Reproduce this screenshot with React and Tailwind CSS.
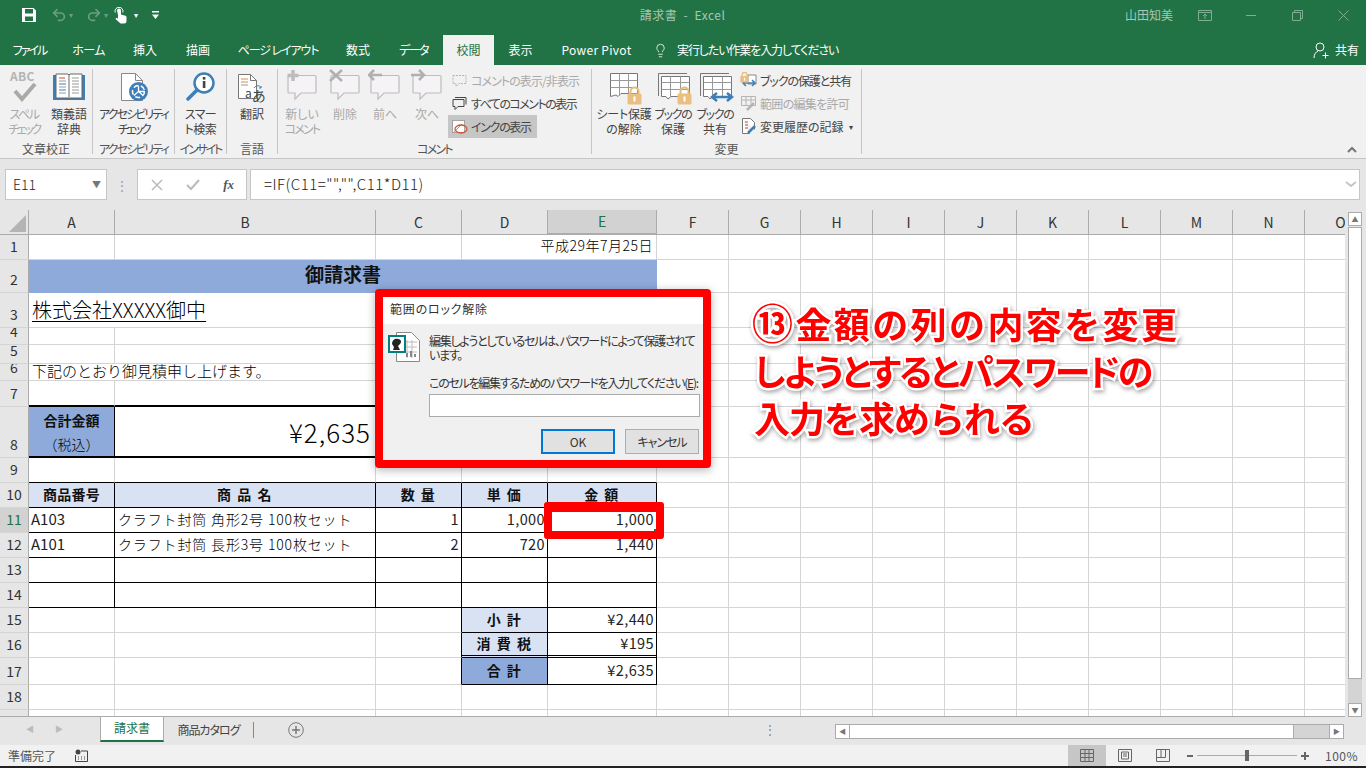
import { Lightbulb, Redo2, Undo2 } from "lucide-react"

const RIGHT = { g: "border-r border-r-[#d4d4d4]", k: "border-r border-r-black", n: "border-r-0" }
const BOTTOM = {
    g: "border-b border-b-[#d4d4d4]",
    k: "border-b border-b-black",
    K: "border-b-2 border-b-black",
    d: "border-b-[3px] border-b-black border-double",
    n: "border-b-0",
}
const SPAN = { 1: "col-span-1", 2: "col-span-2", 5: "col-span-5" }

// katakana runs much narrower in the original UI font
const KANA = {
    "スペル": "tracking-[-1.5px]",
    "チェック": "tracking-[-2.5px]",
    "アクセシビリティ": "tracking-[-1.9px]",
    "インサイト": "tracking-[-2.2px]",
    "スマー": "tracking-[-0.5px]",
    "ト検索": "tracking-[-0.5px]",
    "コメント": "tracking-[-1.8px]",
    "ブックの": "tracking-[-1.3px]",
    "シート保護": "tracking-[-0.2px]",
}

const Cell = ({ r = "g", b = "g", span = 1, className = "", children }) => (
    <div className={`${RIGHT[r]} ${BOTTOM[b]} ${SPAN[span]} flex items-center overflow-hidden whitespace-nowrap ${className}`}>{children}</div>
)

const Head = ({ children, active }) => (
    <div className={`flex items-center justify-center border-r border-b border-r-[#ababab] border-b-[#ababab] text-[14px] ${active ? "bg-[#d2d2d2] text-[#217346] border-b-2 border-b-[#217346]" : "bg-[#e6e6e6] text-[#333]"}`}>{children}</div>
)

const Row = ({ n, active, children }) => (
    <>
        <div className={`flex items-end justify-center overflow-hidden border-r border-b border-r-[#ababab] border-b-[#d4d4d4] text-[14px] ${active ? "bg-[#d2d2d2] text-[#217346]" : "bg-[#e6e6e6] text-[#333]"}`}>
            <span className="h-[25px] shrink-0 leading-[25px]">{n}</span>
        </div>
        {children}
        {Array.from({ length: 10 }).map((_, i) => <Cell key={i} />)}
    </>
)

const TH = ({ children, b = "k", fill = "bg-[#d9e2f3]", track = "tracking-[1.500px]" }) => (
    <Cell r="k" b={b} className={`${fill} ${track} justify-center pb-[1px] font-bold text-[14px] text-[#111]`}>{children}</Cell>
)
const Num = ({ children, b = "k" }) => (
    <Cell r="k" b={b} className="justify-end pb-[2px] pr-[2px] text-[14.500px] tracking-[0.4px] text-[#222]">{children}</Cell>
)

// ribbon bits
const Group = ({ w, label, children }) => (
    <div className={`${w} mt-[4px] flex h-[85px] shrink-0 flex-col border-r border-[#c6c6c6]`}>
        <div className="flex h-[75px] overflow-visible">{children}</div>
        <div className={`h-[10px] whitespace-nowrap text-center text-[12px] leading-[10px] text-[#555] ${KANA[label] ?? ""}`}>{label}</div>
    </div>
)

const Big = ({ w, icon, lines, off }) => (
    <div className={`${w} flex shrink-0 flex-col items-center text-[12px] leading-[15px] ${off ? "text-[#a9a9a9]" : "text-[#444]"}`}>
        <div className="flex h-[37px] items-start justify-center">{icon}</div>
        {lines.map(l => <div key={l} className={`whitespace-nowrap ${KANA[l] ?? ""}`}>{l}</div>)}
    </div>
)

const Small = ({ icon, children, off, on, className = "" }) => (
    <div className={`flex h-[23px] items-center gap-[3px] whitespace-nowrap text-[12px] ${off ? "text-[#a9a9a9]" : "text-[#444]"} ${on ? "bg-[#c6c6c6]" : ""} ${className}`}>
        <span className="flex w-[17px] justify-center">{icon}</span>
        {children}
    </div>
)

const Bubble = ({ children }) => (
    <svg width="34" height="34" viewBox="0 0 34 34" fill="none">
        <path d="M4 6.500h26a1 1 0 0 1 1 1V23a1 1 0 0 1-1 1H16l-6 6v-6H4a1 1 0 0 1-1-1V7.500a1 1 0 0 1 1-1z" fill="#f5f3f5" stroke="#bdbdbd" strokeWidth="1.2" />
        {children}
    </svg>
)

const Lock = ({ x, y }) => (
    <g transform={`translate(${x} ${y})`}>
        <path d="M3.500 7V4.500a4 4 0 0 1 8 0V7" stroke="#e6bc78" strokeWidth="2" fill="none" />
        <rect x="0.500" y="6.500" width="14" height="11" rx="1.500" fill="#e9c07f" />
        <rect x="6.500" y="9.500" width="2" height="5" fill="#fff" />
    </g>
)

const SheetGrid = ({ book, box, children }) => (
    <svg className="mt-[3px]" width="40" height="36" viewBox={box} fill="none">
        {book && <path d="M1.500 24V1.500H30" stroke="#777" />}
        <path d={book ? "M4.500 24.500V4.500h28v20H14l-3 2.500-2-2.500z" : "M1.500 24.500V1.500h27v20H12l-3 3-2-1.500z"} fill="#fff" stroke="#777" />
        <path d={book ? "M4.500 10.500h28M4.500 17.500h28M13.500 4.500v20M23.500 4.500v20" : "M1.500 8.500h27M1.500 15.500h27M10.500 1.500v22M19.500 1.500v20"} stroke="#999" />
        {children}
    </svg>
)

const TOP_TABS = [
    ["ファイル", "w-[59px] tracking-[-2px]"], ["ホーム", "w-[59px] tracking-[-0.6px]"], ["挿入", "w-[54px]"], ["描画", "w-[52px]"],
    ["ページ レイアウト", "w-[108px] tracking-[-1.100px]"], ["数式", "w-[52px]"], ["データ", "w-[59px] tracking-[-1.600px]"],
]

const App = () => (
    <div className="relative flex h-[768px] w-[1366px] flex-col overflow-hidden bg-[#e6e6e6] font-['Noto_Sans_CJK_JP','Noto_Sans',sans-serif] [font-feature-settings:'palt']">
        {/* title bar */}
        <div className="flex h-[35px] shrink-0 items-center bg-[#217346] pb-[5px] text-[12px] text-[#a6c7b5]">
            <div className="flex flex-1 items-center pl-[21px]">
                <svg width="16" height="16" viewBox="0 0 16 16"><path fillRule="evenodd" d="M1 1h11.500L15 3.500V15H1zM4 2v4.500h8V2zM4 9.500V14h8V9.500z" fill="#fff" /></svg>
                <Undo2 size={16} strokeWidth={2.5} className="ml-[14px] text-[#6a9f82]" />
                <span className="ml-[2px] text-[8px] text-[#6a9f82]">▾</span>
                <Redo2 size={16} strokeWidth={2.5} className="ml-[13px] text-[#6a9f82]" />
                <span className="ml-[2px] text-[8px] text-[#6a9f82]">▾</span>
                <svg className="ml-[6px]" width="13" height="17" viewBox="0 0 13 17" fill="#fff">
                    <path d="M3 3.500a2 2 0 0 1 4 0v4l4.500 1.200a1.500 1.500 0 0 1 1 1.500V14a2.500 2.500 0 0 1-2.500 2.500H6.500L1.500 12l.8-1.200L4 11.500V8z" />
                    <path d="M1.200 5.500a4 4 0 1 1 7.600 0" fill="none" stroke="#fff" />
                </svg>
                <span className="ml-[7px] text-[8px] text-white">▾</span>
                <svg className="ml-[14px]" width="7" height="8" viewBox="0 0 7 8" fill="#fff"><path d="M0 0h7v1.500H0zM0 3.500h7L3.500 8z" /></svg>
            </div>
            <div className="mr-[22px] tracking-[0.5px]">請求書 &nbsp;-&nbsp; Excel</div>
            <div className="flex flex-1 items-center justify-end">
                <span className="mr-[9px] text-[12px]">山田知美</span>
                <div className="flex w-[46px] justify-center">
                    <svg width="14" height="11" viewBox="0 0 14 11" fill="none" stroke="#7fae94"><path d="M.5.500h13v10H.5zM.5 2.500h13M7 9V4.500M5 6l2-2 2 2" /></svg>
                </div>
                <div className="flex w-[46px] justify-center"><div className="h-px w-[10px] bg-[#7fae94]" /></div>
                <div className="flex w-[46px] justify-center">
                    <svg width="11" height="11" viewBox="0 0 11 11" fill="none" stroke="#7fae94"><path d="M.5 2.500h8v8h-8zM2.500 2.500v-2h8v8h-2" /></svg>
                </div>
                <div className="flex w-[46px] justify-center">
                    <svg width="11" height="11" viewBox="0 0 11 11" stroke="#7fae94"><path d="M.5.500l10 10M10.500.500l-10 10" /></svg>
                </div>
            </div>
        </div>

        {/* tabs */}
        <div className="flex h-[30px] shrink-0 items-center bg-[#217346] text-[12px] text-white">
            {TOP_TABS.map(([t, w]) => <div key={t} className={`${w} text-center`}>{t}</div>)}
            <div className="flex h-full w-[51px] items-center justify-center bg-[#f1f1f1] text-[#217346]">校閲</div>
            <div className="w-[53px] text-center">表示</div>
            <div className="w-[99px] text-center tracking-[0.3px]">Power Pivot</div>
            <Lightbulb size={15} strokeWidth={1.25} className="ml-[7px]" />
            <span className="ml-[9px] tracking-[-1.100px]">実行したい作業を入力してください</span>
            <div className="ml-auto flex items-center gap-[6px] pr-[7px]">
                <svg width="16" height="17" viewBox="0 0 16 17" fill="none" stroke="#fff"><circle cx="7" cy="5" r="4" /><path d="M1 16c0-4 2-6 4-7M9.500 13.500h6M12.500 10.500v6" /></svg>
                <span>共有</span>
            </div>
        </div>

        {/* ribbon */}
        <div className="relative flex h-[94px] shrink-0 border-b border-[#c6c6c6] bg-[#f1f1f1]">
            <Group w="w-[93px]" label="文章校正">
                <Big w="w-[48px]" off lines={["スペル", "チェック"]} icon={
                    <div className="relative h-[36px] w-[28px]">
                        <span className="absolute left-0 top-0 text-[12px] font-bold leading-[13px] tracking-[0.3px] text-[#b4b4b4]">ABC</span>
                        <svg className="absolute left-[3px] top-[12px]" width="24" height="22" viewBox="0 0 24 22" fill="none"><path d="M2 10l7 8L22 3" stroke="#a9a9a9" strokeWidth="4" /></svg>
                    </div>
                } />
                <Big w="w-[42px]" lines={["類義語", "辞典"]} icon={
                    <svg className="mt-[4px]" width="32" height="28" viewBox="0 0 32 28" fill="none">
                        <path d="M0 2h3v23h26V2h3v25H0z" fill="#3f7fb8" />
                        <path d="M3 1h12l1 1 1-1h12v24H17l-1 1-1-1H3z" fill="#fff" stroke="#666" />
                        <path d="M16 2v23" stroke="#666" />
                        <path d="M6 5h6" stroke="#d2452f" />
                        <path d="M6 8h7M6 14h7M19 5h7M19 8h7M19 11h7M19 14h7M19 17h7M19 20h7M6 20h7" stroke="#999" />
                        <path d="M6 11h7M6 17h7" stroke="#3f7fb8" />
                    </svg>
                } />
            </Group>
            <Group w="w-[82px]" label="アクセシビリティ">
                <Big w="w-[81px]" lines={["アクセシビリティ", "チェック"]} icon={
                    <svg className="mt-[3px]" width="30" height="30" viewBox="0 0 30 30" fill="none">
                        <path d="M2.500 1.500h14l7 7v20h-21z" fill="#fff" stroke="#888" />
                        <path d="M16.500 1.500v7h7" stroke="#888" />
                        <circle cx="19.500" cy="19.500" r="9.500" fill="#3f7fb8" />
                        <circle cx="19.500" cy="19.500" r="6" fill="none" stroke="#fff" strokeWidth="1.500" strokeDasharray="5 2.500" />
                        <path d="M19.500 14v5.500l-4.500 4M19.500 19.500l4.500 4M19.500 19.500H26" stroke="#fff" strokeWidth="1.300" />
                    </svg>
                } />
            </Group>
            <Group w="w-[52px]" label="インサイト">
                <Big w="w-[51px]" lines={["スマー", "ト検索"]} icon={
                    <svg className="mt-[3px]" width="30" height="30" viewBox="0 0 30 30" fill="none">
                        <circle cx="18" cy="11" r="9.500" fill="#fff" stroke="#3f7fb8" strokeWidth="2.500" />
                        <path d="M11 18l-9 9" stroke="#3f7fb8" strokeWidth="3.500" strokeLinecap="round" />
                        <rect x="16.800" y="9" width="2.600" height="7" fill="#444" />
                        <rect x="16.800" y="5" width="2.600" height="2.600" fill="#444" />
                    </svg>
                } />
            </Group>
            <Group w="w-[51px]" label="言語">
                <Big w="w-[50px]" lines={["翻訳"]} icon={
                    <div className="relative mt-[4px] h-[32px] w-[30px]">
                        <svg width="30" height="30" viewBox="0 0 30 30" fill="none">
                            <path d="M1.500 1.500h12l6 6v18h-18z" fill="#fff" stroke="#777" />
                            <path d="M13.500 1.500v6h6" stroke="#777" />
                            <path d="M4 6h7M4 9h7" stroke="#e08a3e" />
                            <path d="M4 12h7" stroke="#999" />
                            <path d="M17 15c2-3 6-3 7 0M24 15l-2 0M24 15v-2" stroke="#3f7fb8" />
                        </svg>
                        <span className="absolute left-[8px] top-[13px] text-[12px] leading-[14px] text-[#444]">a</span>
                        <span className="absolute left-[15px] top-[14px] text-[14px] leading-[16px] text-[#444]">あ</span>
                    </div>
                } />
            </Group>
            <Group w="w-[314px]" label="コメント">
                <Big w="w-[48px]" off lines={["新しい", "コメント"]} icon={
                    <Bubble><path d="M9 0v11M3.500 5.500h11" stroke="#bdbdbd" strokeWidth="3.500" transform="translate(-1 1)" /></Bubble>
                } />
                <Big w="w-[38px]" off lines={["削除"]} icon={
                    <Bubble><path d="M2 1l12 11M14 1L2 12" stroke="#b0b0b0" strokeWidth="2.500" /></Bubble>
                } />
                <Big w="w-[42px]" off lines={["前へ"]} icon={
                    <Bubble><path d="M6 1L1 6l5 5M1 6h13" stroke="#b0b0b0" strokeWidth="2.500" /></Bubble>
                } />
                <Big w="w-[42px]" off lines={["次へ"]} icon={
                    <Bubble><path d="M9 1l5 5-5 5M14 6H1" stroke="#b0b0b0" strokeWidth="2.500" /></Bubble>
                } />
                <div className="flex w-[143px] flex-col pl-[3px]">
                    <Small off className="tracking-[-0.9px]" icon={<svg width="15" height="14" viewBox="0 0 15 14" fill="none" stroke="#b5b5b5" strokeDasharray="2 1"><path d="M1 1.500h13v8H7l-3 3v-3H1z" /></svg>}>コメントの表示/非表示</Small>
                    <Small className="tracking-[-1.500px]" icon={<svg width="15" height="14" viewBox="0 0 15 14" fill="none" stroke="#444"><path d="M3 .5h11v7M1 2.500h11v7H6l-3 3v-3H1z" /></svg>}>すべてのコメントの表示</Small>
                    <Small on className="ml-[-3px] w-[89px] pl-[3px] tracking-[-1.300px]" icon={<svg width="16" height="14" viewBox="0 0 16 14" fill="none"><path d="M.5.500h12v12H.5z" fill="#fff" stroke="#666" strokeDasharray="1 1" /><path d="M2 12L10 4" stroke="#999" /><ellipse cx="9" cy="9" rx="6" ry="4" stroke="#d2552f" strokeWidth="1.300" /></svg>}>インクの表示</Small>
                </div>
            </Group>
            <Group w="w-[270px]" label="変更">
                <Big w="w-[64px]" lines={["シート保護", "の解除"]} icon={
                    <SheetGrid box="-5 0 40 36"><Lock x="18" y="15" /></SheetGrid>
                } />
                <Big w="w-[34px]" lines={["ブックの", "保護"]} icon={
                    <div className="w-[40px] shrink-0"><SheetGrid book box="-4 0 40 36"><Lock x="20" y="15" /></SheetGrid></div>
                } />
                <Big w="w-[50px]" lines={["ブックの", "共有"]} icon={
                    <SheetGrid book box="-4 0 40 36"><path d="M14 25h18M18 21l-5 4 5 4M28 21l5 4-5 4" stroke="#3f7fb8" strokeWidth="2.500" fill="none" /></SheetGrid>
                } />
                <div className="flex w-[120px] flex-col">
                    <Small className="tracking-[-1.100px]" icon={<svg width="17" height="17" viewBox="0 0 17 17" fill="none"><path d="M8 3h8v9H8z" fill="#fff" stroke="#888" /><path d="M3 11h12M6 8l-3 3 3 3M12 8l3 3-3 3" stroke="#3f7fb8" strokeWidth="1.500" /><g transform="scale(0.6)"><Lock x="0" y="0" /></g></svg>}>ブックの保護と共有</Small>
                    <Small off className="tracking-[-0.7px]" icon={<svg width="16" height="15" viewBox="0 0 16 15" fill="none" stroke="#b5b5b5"><path d="M.5.500h14v9H.5zM.5 4h14M5 .5v9M10 .5v9" /><path d="M6 14l7-7" strokeWidth="2.500" /></svg>}>範囲の編集を許可</Small>
                    <Small icon={<svg width="16" height="17" viewBox="0 0 16 17" fill="none"><path d="M1.500.500h8l4 4v7M1.500.500v15h7" fill="#fff" stroke="#777" /><path d="M4 4h3M4 7h3M4 10h3" stroke="#d2452f" /><path d="M7 15l7-7" stroke="#3f7fb8" strokeWidth="2.500" /></svg>}>
                        変更履歴の記録<span className="ml-[2px] text-[8px]">▾</span>
                    </Small>
                </div>
            </Group>
            <svg className="absolute right-[9px] bottom-[5px]" width="10" height="7" viewBox="0 0 10 7" fill="none"><path d="M1 6l4-4 4 4" stroke="#777" strokeWidth="2" /></svg>
        </div>

        {/* formula bar */}
        <div className="flex h-[51px] shrink-0 items-start pl-[5px] pt-[10px]">
            <div className="flex h-[31px] w-[102px] items-center justify-between border border-[#c6c6c6] bg-white pl-[7px] pr-[5px] text-[14px] font-light text-[#222]">
                E11<span className="text-[9px] text-[#777]">▼</span>
            </div>
            <div className="flex h-[31px] w-[30px] items-center justify-center text-[12px] leading-[12px] text-[#999]">⋮</div>
            <div className="flex h-[31px] w-[110px] items-center justify-between border border-[#c6c6c6] bg-white pl-[13px] pr-[12px]">
                <svg width="12" height="12" viewBox="0 0 12 12" stroke="#bbb" strokeWidth="1.500"><path d="M1 1l10 10M11 1L1 11" /></svg>
                <svg width="14" height="12" viewBox="0 0 14 12" fill="none" stroke="#bbb" strokeWidth="2"><path d="M1 6l4 4 8-9" /></svg>
                <span className="font-['Liberation_Serif',serif] text-[13px] font-bold italic text-[#555]">fx</span>
            </div>
            <div className="ml-[3px] flex h-[31px] w-[1110px] items-center justify-between border border-[#c6c6c6] bg-white pb-[1px] pl-[13px] pr-[2px] text-[15px] font-light tracking-[0.5px] text-[#222]">
                =IF(C11="","",C11*D11)
                <svg width="12" height="7" viewBox="0 0 12 7" fill="none"><path d="M1 1l5 4 5-4" stroke="#c6c6c6" strokeWidth="2" /></svg>
            </div>
        </div>

        {/* sheet */}
        <div className="flex h-[507px] shrink-0">
            <div className="h-full w-[1345px] shrink-0 overflow-hidden border-b border-[#ababab] bg-white [font-feature-settings:normal]">
                <div className="grid h-[507px] w-[1421px] grid-cols-[29px_86px_261px_86px_86px_109px_repeat(10,72px)] grid-rows-[25px_25px_33px_35px_17px_19px_17px_26px_51px_25px_25px_25px_25px_25px_25px_25px_25px_27px_25px_7px] text-[#222]">
                    <div className="flex items-end justify-end border-r border-b border-r-[#ababab] border-b-[#ababab] bg-[#e6e6e6] p-[2px]">
                        <div className="h-0 w-0 border-b-[17px] border-l-[17px] border-b-[#b4b4b4] border-l-transparent" />
                    </div>
                    {["A", "B", "C", "D"].map(c => <Head key={c}>{c}</Head>)}
                    <Head active>E</Head>
                    {["F", "G", "H", "I", "J", "K", "L", "M", "N", "O"].map(c => <Head key={c}>{c}</Head>)}

                    <Row n="1"><Cell /><Cell /><Cell /><Cell span={2} className="justify-end pb-[3px] pr-[3px] text-[14px] font-light tracking-[0.5px] text-black">平成29年7月25日</Cell></Row>
                    <Row n="2"><Cell span={5} r="n" b="n" className="justify-center bg-[#8eaadb] pb-[4px] text-[19px] font-bold text-[#111]">御請求書</Cell></Row>
                    <Row n="3"><Cell span={2} className="pl-[3px] text-[20px] font-light text-black"><span className="underline decoration-1 underline-offset-[3px]">株式会社XXXXX御中</span></Cell><Cell /><Cell /><Cell /></Row>
                    <Row n="4"><Cell /><Cell /><Cell /><Cell /><Cell /></Row>
                    <Row n="5"><Cell /><Cell /><Cell /><Cell /><Cell /></Row>
                    <Row n="6"><Cell span={2} className="pb-[2px] pl-[3px] text-[15px] font-light text-black">下記のとおり御見積申し上げます。</Cell><Cell /><Cell /><Cell /></Row>
                    <Row n="7"><Cell b="K" /><Cell b="K" /><Cell /><Cell /><Cell /></Row>
                    <Row n="8">
                        <Cell r="k" b="K" className="flex-col justify-center bg-[#8eaadb] text-[14px] leading-[24px]">
                            <span className="font-bold text-[#111]">合計金額</span>
                            <span className="font-light text-black">（税込）</span>
                        </Cell>
                        <Cell r="k" b="K" className="justify-end pr-[4px] text-[26px] font-light tracking-[1px] text-black">¥2,635</Cell>
                        <Cell b="K" /><Cell b="K" /><Cell b="K" />
                    </Row>
                    <Row n="9"><Cell b="k" /><Cell b="k" /><Cell b="k" /><Cell b="k" /><Cell b="k" /></Row>
                    <Row n="10">
                        <TH track="tracking-[0.3px]">商品番号</TH><TH>商 品 名</TH><TH>数 量</TH><TH>単 価</TH><TH>金 額</TH>
                    </Row>
                    <Row n="11" active>
                        <Cell r="k" b="k" className="pb-[2px] pl-[2px] text-[15px]">A103</Cell>
                        <Cell r="k" b="k" className="pb-[2px] pl-[3px] text-[14px] font-light tracking-[0.85px] text-black">クラフト封筒 角形2号 100枚セット</Cell>
                        <Num>1</Num><Num>1,000</Num><Num>1,000</Num>
                    </Row>
                    <Row n="12">
                        <Cell r="k" b="k" className="pb-[2px] pl-[2px] text-[15px]">A101</Cell>
                        <Cell r="k" b="k" className="pb-[2px] pl-[3px] text-[14px] font-light tracking-[0.85px] text-black">クラフト封筒 長形3号 100枚セット</Cell>
                        <Num>2</Num><Num>720</Num><Num>1,440</Num>
                    </Row>
                    <Row n="13"><Cell r="k" b="k" /><Cell r="k" b="k" /><Cell r="k" b="k" /><Cell r="k" b="k" /><Cell r="k" b="k" /></Row>
                    <Row n="14"><Cell r="k" b="k" /><Cell r="k" b="k" /><Cell r="k" b="k" /><Cell r="k" b="k" /><Cell r="k" b="k" /></Row>
                    <Row n="15"><Cell /><Cell /><Cell r="k" /><TH>小 計</TH><Num>¥2,440</Num></Row>
                    <Row n="16"><Cell /><Cell /><Cell r="k" /><TH b="d">消 費 税</TH><Num b="d">¥195</Num></Row>
                    <Row n="17"><Cell /><Cell /><Cell r="k" /><TH fill="bg-[#8eaadb]">合 計</TH><Num>¥2,635</Num></Row>
                    <Row n="18"><Cell /><Cell /><Cell /><Cell /><Cell /></Row>
                    <Row n="19"><Cell /><Cell /><Cell /><Cell /><Cell /></Row>
                </div>
            </div>
            <div className="flex w-[21px] flex-col pl-[3px] pr-[4px] pt-[2px]">
                <div className="flex h-[14px] items-center justify-center border border-[#ababab] bg-white text-[7px] leading-[7px] text-[#777]">▲</div>
                <div className="mt-px h-[452px] border border-[#ababab] bg-white" />
                <div className="h-[24px] bg-[#d4d4d4]" />
                <div className="flex h-[14px] items-center justify-center border border-[#ababab] bg-white text-[7px] leading-[7px] text-[#777]">▼</div>
            </div>
        </div>

        {/* sheet tabs */}
        <div className="flex h-[28px] shrink-0 items-start text-[12px]">
            <div className="flex h-[23px] w-[100px] items-center pl-[26px] text-[8px] text-[#bbb]">
                <span>◀</span><span className="ml-[21px]">▶</span>
            </div>
            <div className="flex h-[25px] w-[64px] items-center justify-center border-x border-b-2 border-x-[#ababab] border-b-[#217346] bg-white pb-[2px] text-[#217346]">請求書</div>
            <div className="mt-[5px] flex h-[16px] w-[90px] items-center justify-center border-r border-[#888] tracking-[-1px] text-[#444]">商品カタログ</div>
            <svg className="ml-[34px] mt-[5px]" width="16" height="16" viewBox="0 0 16 16" fill="none" stroke="#777"><circle cx="8" cy="8" r="7.300" /><path d="M8 4v8M4 8h8" strokeWidth="1.500" /></svg>
            <div className="ml-auto mt-[2px] mr-[59px] text-[12px] leading-[20px] text-[#888]">⋮</div>
            <div className="mr-[22px] mt-[7px] flex h-[15px] w-[509px] border border-[#ababab] bg-[#d4d4d4]">
                <div className="flex w-[14px] items-center justify-center border-r border-[#ababab] bg-white text-[7px] text-[#777]">◀</div>
                <div className="w-[444px] border-r border-[#ababab] bg-white" />
                <div className="ml-auto flex w-[14px] items-center justify-center border-l border-[#ababab] bg-white text-[7px] text-[#777]">▶</div>
            </div>
        </div>

        {/* status bar */}
        <div className="flex h-[21px] shrink-0 items-center bg-[#f1f1f1] pl-[8px] text-[12px] text-[#555]">
            準備完了
            <svg className="ml-[19px]" width="13" height="13" viewBox="0 0 13 13" fill="none"><circle cx="3" cy="3" r="2.500" fill="#444" /><path d="M6 2h6.500v10.500H.5V6" stroke="#444" /><path d="M3 8h1M6 8h1M9 8h1M3 10h1M6 10h1M9 10h1" stroke="#444" /></svg>
            <div className="ml-auto flex h-full items-center">
                <div className="flex h-full w-[38px] items-center justify-center bg-[#c6c6c6]">
                    <svg width="14" height="13" viewBox="0 0 14 13" fill="none" stroke="#666"><path d="M.5.500h13v12H.5zM.5 4.500h13M.5 8.500h13M5 .5v12M9 .5v12" /></svg>
                </div>
                <div className="flex w-[38px] justify-center">
                    <svg width="14" height="13" viewBox="0 0 14 13" fill="none" stroke="#666"><path d="M.5.500h13v12H.5zM3.500 3h7v7h-7zM5 5h4M5 7h4" /></svg>
                </div>
                <div className="flex w-[38px] justify-center">
                    <svg width="14" height="13" viewBox="0 0 14 13" fill="none" stroke="#666"><path d="M.5.500h13v12H.5zM.5 8.500h9V.5M5 .5v8" /></svg>
                </div>
                <span className="ml-[5px] h-[2px] w-[6px] bg-[#666]" />
                <div className="relative ml-[4px] h-px w-[100px] bg-[#aaa]">
                    <div className="absolute left-[48px] top-[-5px] h-[11px] w-[4px] bg-[#666]" />
                </div>
                <div className="relative ml-[4px] h-[8px] w-[8px]">
                    <div className="absolute left-0 top-[3px] h-[2px] w-[8px] bg-[#666]" />
                    <div className="absolute left-[3px] top-0 h-[8px] w-[2px] bg-[#666]" />
                </div>
                <span className="ml-[16px] w-[32px] text-right text-[12px] tracking-[0.5px]">100%</span>
                <span className="w-[9px]" />
            </div>
        </div>
        <div className="h-[2px] shrink-0 bg-[#222]" />

        {/* dialog */}
        <div className="absolute left-[375px] top-[289px] h-[179px] w-[336px] rounded-[4px] border-8 border-[#ff0000] bg-[#f0f0f0] text-[12px] text-[#333] shadow-[0_2px_10px_rgba(0,0,0,0.3)]">
            <div className="flex h-[27px] items-center bg-white pb-[3px] pl-[7px] tracking-[0.8px] text-[#333]">範囲のロック解除</div>
            <div className="flex pl-[5px] pt-[10px]">
                <div className="relative mt-[-2px] h-[30px] w-[32px] shrink-0">
                    <svg className="absolute left-[8px] top-0" width="24" height="30" viewBox="0 0 24 30" fill="none">
                        <path d="M.5.500h15l8 8v21H.5z" fill="#fff" stroke="#888" />
                        <path d="M6 10h15M6 15h15M6 20h15M11 8v18M16 8v18" stroke="#bbb" />
                        <path d="M11 25v-4M15 25v-6M19 25v-3" stroke="#888" strokeWidth="2" />
                    </svg>
                    <svg className="absolute left-0 top-[3px]" width="18" height="18" viewBox="0 0 18 18">
                        <rect x="1" y="1" width="16" height="16" fill="#fff" stroke="#008080" strokeWidth="2" />
                        <path d="M4 9c0-4 3-6 6-5 3 0 4 3 2 5l-2 2 2 4H5l1-3z" fill="#222" />
                    </svg>
                </div>
                <div className="ml-[9px] w-[271px]">
                    <p className="whitespace-nowrap leading-[14px] tracking-[-1.300px]">編集しようとしているセルは、パスワードによって保護されて<br />います。</p>
                    <p className="mt-[14px] whitespace-nowrap leading-[14px] tracking-[-1.270px]">このセルを編集するためのパスワードを入力してください(<span className="underline">E</span>):</p>
                    <div className="mt-[4px] h-[23px] w-[271px] border border-[#ababab] bg-white" />
                </div>
            </div>
            <div className="mt-[12px] flex justify-end gap-[10px] pr-[4px]">
                <div className="flex h-[25px] w-[74px] items-center justify-center border-2 border-[#0078d7] bg-[#e1e1e1]">OK</div>
                <div className="flex h-[25px] w-[74px] items-center justify-center border border-[#adadad] bg-[#e1e1e1] tracking-[-1px]">キャンセル</div>
            </div>
        </div>

        {/* red frame on E11 */}
        <div className="absolute left-[654px] top-[529px] h-[3px] w-[3px] bg-[#217346]" />
        <div className="absolute left-[544px] top-[502px] h-[37px] w-[120px] rounded-[3px] border-x-8 border-t-[10px] border-b-8 border-[#ff0000]" />
        <div className="absolute left-[752px] top-[300px] text-[36px] font-bold leading-[47px] text-[#ff0000] [-webkit-text-stroke:5px_#fff] [paint-order:stroke_fill] [filter:drop-shadow(1px_2px_2px_rgba(0,0,0,0.35))] [font-feature-settings:normal]">
            <div className="whitespace-nowrap tracking-[2.400px]"><span className="text-[41px] leading-[40px]">⑬</span>金額の列の内容を変更</div>
            <div className="whitespace-nowrap pl-[2px] tracking-[-2px] [font-feature-settings:'palt']">しようとするとパスワードの</div>
            <div className="whitespace-nowrap pl-[2px] tracking-[-1px]">入力を求められる</div>
        </div>
    </div>
)

export default App
